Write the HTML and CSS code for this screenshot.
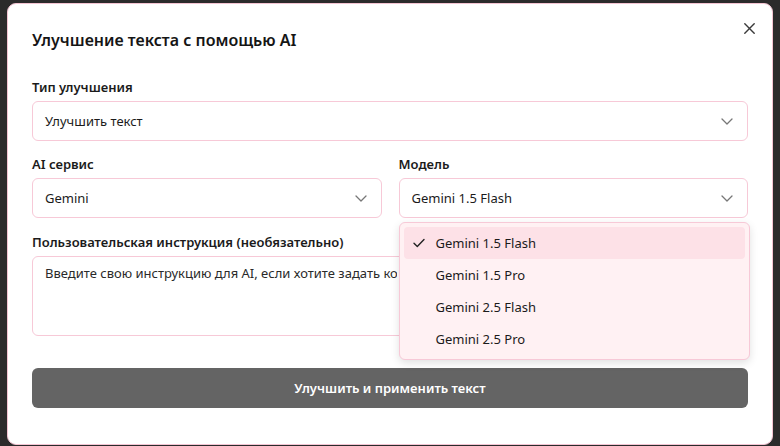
FILE: index.html
```html
<!DOCTYPE html>
<html lang="ru">
<head>
<meta charset="utf-8">
<link rel="stylesheet" href="styles.css">
</head>
<body>
<div class="dialog">
  <button class="close" aria-label="Закрыть">
    <svg width="11" height="11" viewBox="0 0 11 11"><path d="M0.8 0.8L10.2 10.2M10.2 0.8L0.8 10.2" stroke="#3a3a3a" stroke-width="1.4" stroke-linecap="round"/></svg>
  </button>
  <h2 class="title">Улучшение текста с помощью AI</h2>

  <div class="group g1">
    <label class="label">Тип улучшения</label>
    <div class="select">
      <span>Улучшить текст</span>
      <svg class="chev" width="12" height="7" viewBox="0 0 12 7"><path d="M1 1L6 6L11 1" fill="none" stroke="#777" stroke-width="1.3" stroke-linecap="round" stroke-linejoin="round"/></svg>
    </div>
  </div>

  <div class="row">
    <div class="group">
      <label class="label">AI сервис</label>
      <div class="select">
        <span>Gemini</span>
        <svg class="chev" width="12" height="7" viewBox="0 0 12 7"><path d="M1 1L6 6L11 1" fill="none" stroke="#777" stroke-width="1.3" stroke-linecap="round" stroke-linejoin="round"/></svg>
      </div>
    </div>
    <div class="group">
      <label class="label">Модель</label>
      <div class="select-wrap">
        <div class="select">
          <span>Gemini 1.5 Flash</span>
          <svg class="chev" width="12" height="7" viewBox="0 0 12 7"><path d="M1 1L6 6L11 1" fill="none" stroke="#777" stroke-width="1.3" stroke-linecap="round" stroke-linejoin="round"/></svg>
        </div>
        <ul class="menu">
          <li class="item active">
            <svg class="check" width="12" height="10" viewBox="0 0 12 10"><path d="M1 5.2L4.3 8.5L11 1.5" fill="none" stroke="#222" stroke-width="1.4" stroke-linecap="round" stroke-linejoin="round"/></svg>
            <span>Gemini 1.5 Flash</span>
          </li>
          <li class="item"><span>Gemini 1.5 Pro</span></li>
          <li class="item"><span>Gemini 2.5 Flash</span></li>
          <li class="item"><span>Gemini 2.5 Pro</span></li>
        </ul>
      </div>
    </div>
  </div>

  <div class="group g3">
    <label class="label">Пользовательская инструкция (необязательно)</label>
    <div class="textarea"><span class="ph">Введите свою инструкцию для AI, если хотите задать ко</span></div>
  </div>

  <button class="submit">Улучшить и применить текст</button>
</div>
</body>
</html>
```

FILE: styles.css
```css
* { box-sizing: border-box; }
html, body { margin: 0; padding: 0; }
body {
  width: 780px;
  height: 446px;
  background: #2b2b2b;
  font-family: "Noto Sans", "Open Sans", sans-serif;
  color: #1b1b1b;
  overflow: hidden;
}
.dialog {
  position: relative;
  margin: 3px 0 0 7px;
  width: 766px;
  height: 442px;
  background: #fff;
  border: 1px solid #f3c4d2;
  border-radius: 9px;
  padding: 22px 24px 0 24px;
}
.close {
  position: absolute;
  top: 18px;
  right: 17px;
  width: 12px;
  height: 12px;
  padding: 0;
  border: 0;
  background: none;
  display: flex;
  align-items: center;
  justify-content: center;
}
.title {
  margin: 0;
  font-size: 16px;
  line-height: 28px;
  font-weight: 600;
  color: #151515;
}
.group { display: flex; flex-direction: column; gap: 4px; }
.g1 { margin-top: 23px; }
.row {
  margin-top: 13px;
  display: grid;
  grid-template-columns: 1fr 1fr;
  gap: 17px;
}
.g3 { margin-top: 14px; }
.label {
  font-size: 13px;
  line-height: 20px;
  font-weight: 600;
  color: #1b1b1b;
}
.select-wrap { position: relative; }
.select {
  height: 40px;
  border: 1px solid #f7c9d7;
  border-radius: 6px;
  background: #fff;
  display: flex;
  align-items: center;
  justify-content: space-between;
  padding: 0 14px 0 12px;
  font-size: 13px;
}
.chev { display: block; }
.textarea {
  height: 80px;
  border: 1px solid #f7c9d7;
  border-radius: 6px;
  padding: 6px 12px;
  font-size: 13px;
  line-height: 20px;
  color: #2a2a2a;
  white-space: nowrap;
  overflow: hidden;
}
.ph {
  display: inline-block;
  max-width: 352px;
  overflow: hidden;
  vertical-align: top;
}
.submit {
  margin-top: 32px;
  width: 100%;
  height: 40px;
  border: 0;
  border-radius: 6px;
  background: #646464;
  color: #fff;
  font-family: inherit;
  font-size: 13px;
  font-weight: 600;
}
.menu {
  position: absolute;
  top: 44px;
  left: 0;
  width: calc(100% + 2px);
  margin: 0;
  padding: 4px;
  list-style: none;
  background: #fff1f3;
  border: 1px solid #f7c9d7;
  border-radius: 6px;
  box-shadow: 0 3px 8px rgba(0,0,0,0.12);
  z-index: 5;
}
.item {
  position: relative;
  height: 32px;
  display: flex;
  align-items: center;
  padding-left: 32px;
  font-size: 13px;
  border-radius: 4px;
  color: #1b1b1b;
}
.item.active { background: #fde1e7; }
.check {
  position: absolute;
  left: 9px;
  top: 11px;
}
```
